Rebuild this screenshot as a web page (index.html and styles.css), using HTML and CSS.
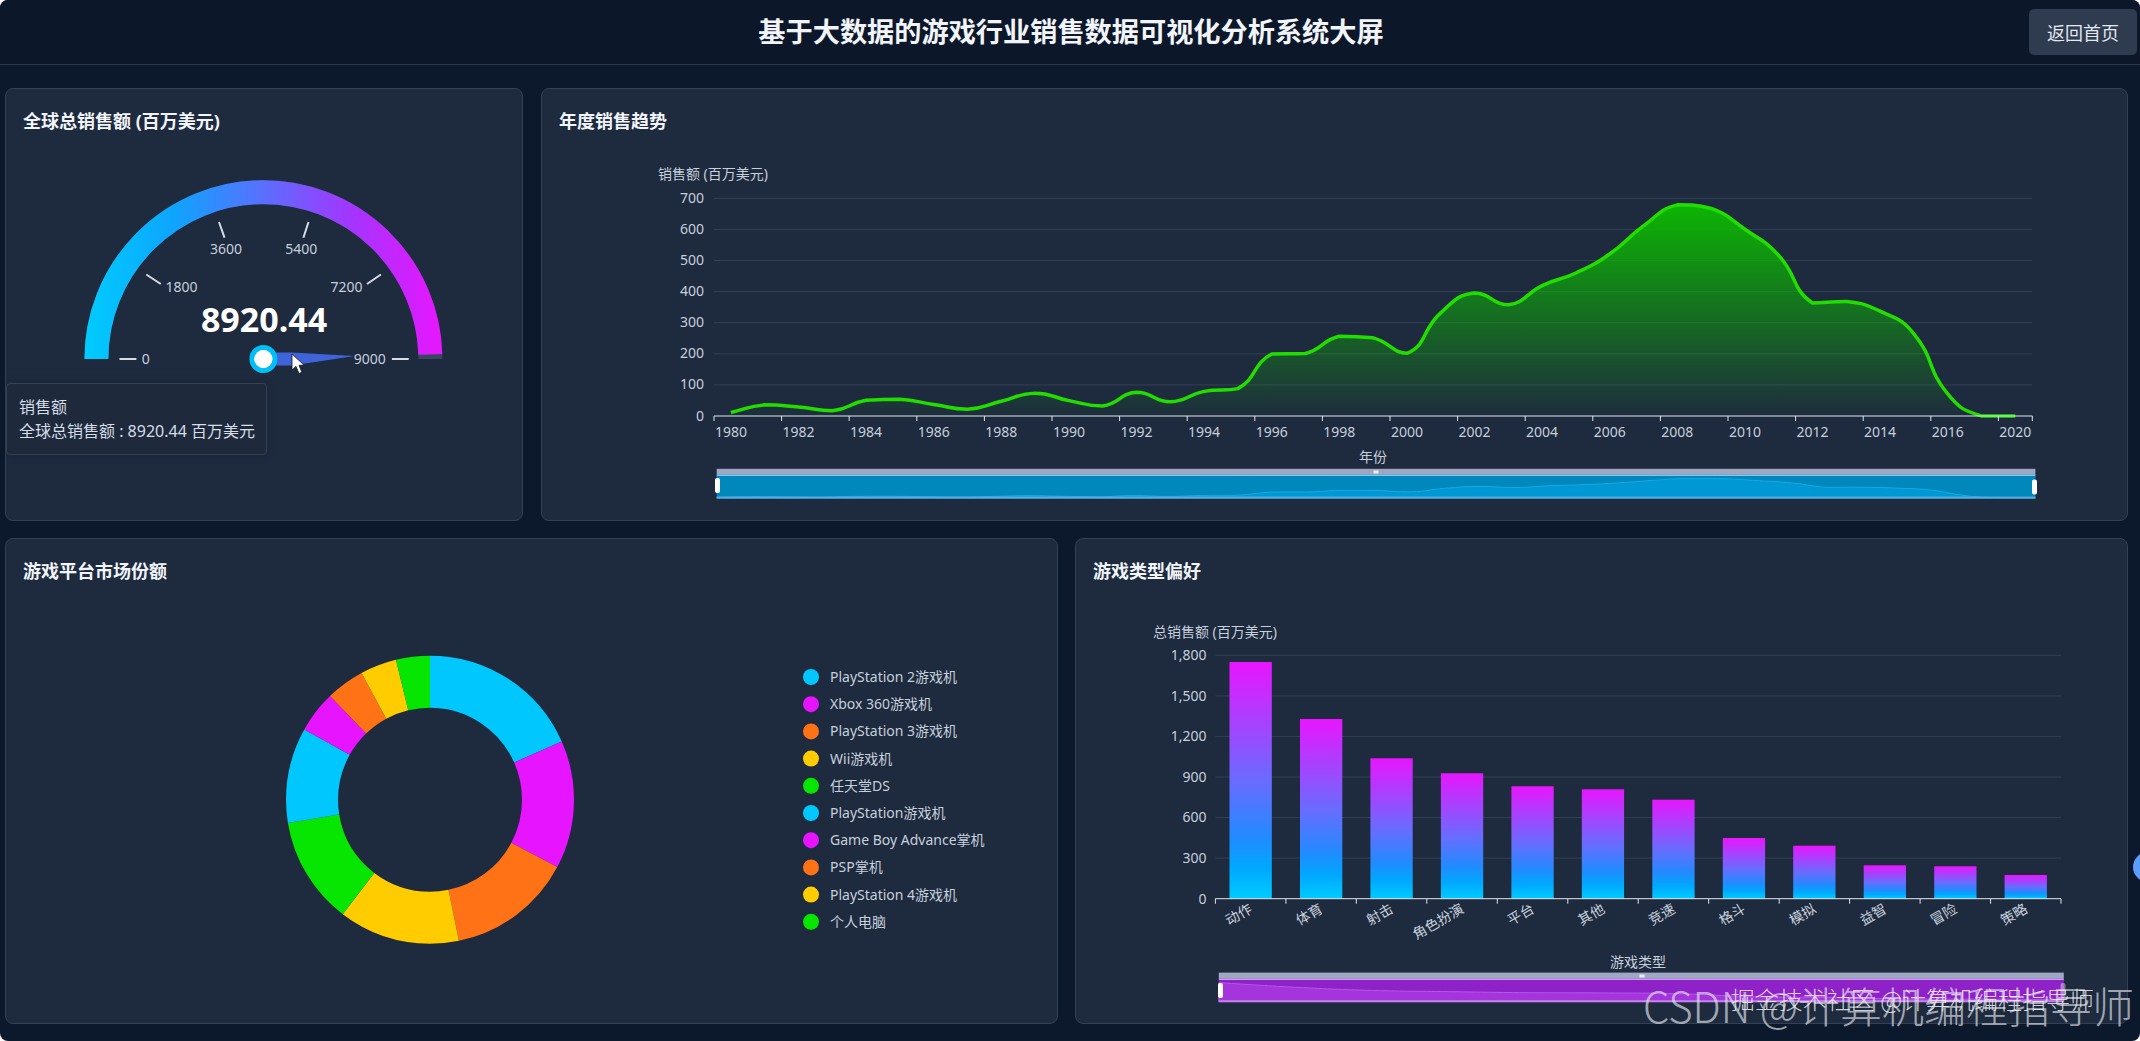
FILE: index.html
```html
<!DOCTYPE html>
<html lang="zh-CN">
<head>
    <meta charset="UTF-8">
    <meta name="viewport" content="width=device-width, initial-scale=1.0">
    <title>基于大数据的游戏行业销售数据可视化分析系统大屏</title>
    <link rel="stylesheet" href="styles.css">
</head>
<body>
<div class="screen">
    <!-- Header -->
    <header class="header">
        <h1 class="header-title">基于大数据的游戏行业销售数据可视化分析系统大屏</h1>
        <button class="back-btn">返回首页</button>
    </header>

    <main class="dashboard">
        <div class="row row-top">
            <!-- Gauge -->
            <section class="panel">
                <h2 class="panel-title">全球总销售额 (百万美元)</h2>
                <svg class="chart" viewBox="6 141 516 379">
                    <defs>
                        <linearGradient id="gaugeGrad" gradientUnits="userSpaceOnUse" x1="85" y1="0" x2="442" y2="0">
                            <stop offset="0" stop-color="#00ccff"/>
                            <stop offset="0.25" stop-color="#0ea4ff"/>
                            <stop offset="0.5" stop-color="#5a6fff"/>
                            <stop offset="0.75" stop-color="#a534ff"/>
                            <stop offset="1" stop-color="#e816ff"/>
                        </linearGradient>
                    </defs>
                    <path class="gauge-rest" d="M96.4 359A167 167 0 0 1 430.4 359"/>
                    <path class="gauge-arc" d="M96.4 359A167 167 0 0 1 430.33 354.34"/>
                    <path class="gauge-tick" d="M146.3 274.5L160.8 284M219 222L224.5 237.7M308.5 222L303.4 237.7M380.9 274.5L367 284M119.5 359H136.4M391.9 359H408.7"/>
                    <text class="t tick-label" x="145.7" y="358" text-anchor="middle">0</text>
                    <text class="t tick-label" x="181.5" y="286" text-anchor="middle">1800</text>
                    <text class="t tick-label" x="226" y="248.5" text-anchor="middle">3600</text>
                    <text class="t tick-label" x="301.3" y="248.5" text-anchor="middle">5400</text>
                    <text class="t tick-label" x="346.4" y="286" text-anchor="middle">7200</text>
                    <text class="t tick-label" x="369.8" y="358" text-anchor="middle">9000</text>
                    <text class="gauge-value" x="264" y="332" text-anchor="middle">8920.44</text>
                    <polygon class="gauge-pointer" points="270,352.5 292,352.5 354.7,356 292,365.5 270,365.5"/>
                    <circle class="gauge-hub-ring" cx="263.4" cy="359" r="11.5"/>
                    <circle class="gauge-hub" cx="263.4" cy="359" r="9"/>
                    <path class="cursor" d="M292 354V370L296 366.4L299 373.5L302 372.2L299 365.4L304 365Z"/>
                </svg>
                <div class="tooltip">
                    <div>销售额</div>
                    <div>全球总销售额 : 8920.44 百万美元</div>
                </div>
            </section>

            <!-- Yearly trend -->
            <section class="panel">
                <h2 class="panel-title">年度销售趋势</h2>
                <svg class="chart" viewBox="542 141 1585 379">
                    <defs>
                        <linearGradient id="areaGrad" x1="0" y1="0" x2="0" y2="1">
                            <stop offset="0" stop-color="#0cbc00" stop-opacity="0.95"/>
                            <stop offset="1" stop-color="#0cbc00" stop-opacity="0.02"/>
                        </linearGradient>
                    </defs>
                    <path class="grid" d="M714 198.3H2032M714 229.4H2032M714 260.5H2032M714 291.6H2032M714 322.7H2032M714 353.8H2032M714 384.9H2032"/>
                    <path id="trendArea" fill="url(#areaGrad)"/>
                    <path id="trendLine" class="trend-line"/>
                    <path class="axis" d="M714 416H2032.3M714 416v5M781.6 416v5M849.2 416v5M916.8 416v5M984.4 416v5M1052 416v5M1119.6 416v5M1187.2 416v5M1254.8 416v5M1322.4 416v5M1390 416v5M1457.6 416v5M1525.2 416v5M1592.8 416v5M1660.4 416v5M1728 416v5M1795.6 416v5M1863.2 416v5M1930.8 416v5M1998.4 416v5M2032.3 416v5"/>
                    <text class="t tick-label" x="713" y="173" text-anchor="middle">销售额 (百万美元)</text>
                    <g text-anchor="end">
                        <text class="t tick-label" x="704" y="197">700</text>
                        <text class="t tick-label" x="704" y="228">600</text>
                        <text class="t tick-label" x="704" y="259">500</text>
                        <text class="t tick-label" x="704" y="290">400</text>
                        <text class="t tick-label" x="704" y="321">300</text>
                        <text class="t tick-label" x="704" y="352.5">200</text>
                        <text class="t tick-label" x="704" y="383.5">100</text>
                        <text class="t tick-label" x="704" y="415">0</text>
                    </g>
                    <g text-anchor="middle">
                        <text class="t tick-label" x="730.9" y="431.7">1980</text>
                        <text class="t tick-label" x="798.5" y="431.7">1982</text>
                        <text class="t tick-label" x="866.1" y="431.7">1984</text>
                        <text class="t tick-label" x="933.7" y="431.7">1986</text>
                        <text class="t tick-label" x="1001.3" y="431.7">1988</text>
                        <text class="t tick-label" x="1068.9" y="431.7">1990</text>
                        <text class="t tick-label" x="1136.5" y="431.7">1992</text>
                        <text class="t tick-label" x="1204.1" y="431.7">1994</text>
                        <text class="t tick-label" x="1271.7" y="431.7">1996</text>
                        <text class="t tick-label" x="1339.3" y="431.7">1998</text>
                        <text class="t tick-label" x="1406.9" y="431.7">2000</text>
                        <text class="t tick-label" x="1474.5" y="431.7">2002</text>
                        <text class="t tick-label" x="1542.1" y="431.7">2004</text>
                        <text class="t tick-label" x="1609.7" y="431.7">2006</text>
                        <text class="t tick-label" x="1677.3" y="431.7">2008</text>
                        <text class="t tick-label" x="1744.9" y="431.7">2010</text>
                        <text class="t tick-label" x="1812.5" y="431.7">2012</text>
                        <text class="t tick-label" x="1880.1" y="431.7">2014</text>
                        <text class="t tick-label" x="1947.7" y="431.7">2016</text>
                        <text class="t tick-label" x="2015.3" y="431.7">2020</text>
                        <text class="t tick-label" x="1373" y="456.4">年份</text>
                    </g>
                    <!-- Zoom slider -->
                    <rect class="slider-top" x="716.7" y="468.8" width="1318.7" height="6"/>
                    <rect x="716.7" y="474.6" width="1318.7" height="2" fill="#7fc6ee"/>
                    <rect x="716.7" y="476" width="1318.7" height="22.4" fill="#0087bb"/>
                    <path id="trendSpark" fill="#0098d4" stroke="#16aae4"/>
                    <rect x="716.7" y="496.6" width="1318.7" height="2" fill="#58b0e2"/>
                    <rect class="slider-grip" x="1373.5" y="470.5" width="5" height="3"/>
                    <rect class="slider-handle" x="715" y="478" width="5" height="15" rx="2"/>
                    <rect class="slider-handle" x="2032" y="479.5" width="5" height="15" rx="2"/>
                </svg>
            </section>
        </div>

        <div class="row row-bottom">
            <!-- Platform share -->
            <section class="panel">
                <h2 class="panel-title">游戏平台市场份额</h2>
                <svg class="chart" viewBox="6 591 1051 432">
                    <g class="donut" transform="rotate(-90 430 799.7)">
                        <circle cx="430" cy="799.7" r="118" pathLength="360" stroke="#00c8ff" stroke-dasharray="66.2 293.8"/>
                        <circle cx="430" cy="799.7" r="118" pathLength="360" stroke="#e614ff" stroke-dasharray="51.7 308.3" stroke-dashoffset="-66.2"/>
                        <circle cx="430" cy="799.7" r="118" pathLength="360" stroke="#ff7216" stroke-dasharray="50.5 309.5" stroke-dashoffset="-117.9"/>
                        <circle cx="430" cy="799.7" r="118" pathLength="360" stroke="#ffcc00" stroke-dasharray="48.9 311.1" stroke-dashoffset="-168.4"/>
                        <circle cx="430" cy="799.7" r="118" pathLength="360" stroke="#06e600" stroke-dasharray="43.4 316.6" stroke-dashoffset="-217.3"/>
                        <circle cx="430" cy="799.7" r="118" pathLength="360" stroke="#00c8ff" stroke-dasharray="38.5 321.5" stroke-dashoffset="-260.7"/>
                        <circle cx="430" cy="799.7" r="118" pathLength="360" stroke="#e614ff" stroke-dasharray="16.8 343.2" stroke-dashoffset="-299.2"/>
                        <circle cx="430" cy="799.7" r="118" pathLength="360" stroke="#ff7216" stroke-dasharray="15.6 344.4" stroke-dashoffset="-316"/>
                        <circle cx="430" cy="799.7" r="118" pathLength="360" stroke="#ffcc00" stroke-dasharray="14.7 345.3" stroke-dashoffset="-331.6"/>
                        <circle cx="430" cy="799.7" r="118" pathLength="360" stroke="#06e600" stroke-dasharray="13.7 346.3" stroke-dashoffset="-346.3"/>
                    </g>
                    <!-- Legend -->
                    <circle cx="811" cy="677" r="8" fill="#00c8ff"/>
                    <text class="t tick-label" x="830" y="676.5">PlayStation 2游戏机</text>
                    <circle cx="811" cy="704.2" r="8" fill="#e614ff"/>
                    <text class="t tick-label" x="830" y="703.7">Xbox 360游戏机</text>
                    <circle cx="811" cy="731.4" r="8" fill="#ff7216"/>
                    <text class="t tick-label" x="830" y="730.9">PlayStation 3游戏机</text>
                    <circle cx="811" cy="758.6" r="8" fill="#ffcc00"/>
                    <text class="t tick-label" x="830" y="758.1">Wii游戏机</text>
                    <circle cx="811" cy="785.8" r="8" fill="#06e600"/>
                    <text class="t tick-label" x="830" y="785.3">任天堂DS</text>
                    <circle cx="811" cy="813" r="8" fill="#00c8ff"/>
                    <text class="t tick-label" x="830" y="812.5">PlayStation游戏机</text>
                    <circle cx="811" cy="840.2" r="8" fill="#e614ff"/>
                    <text class="t tick-label" x="830" y="839.7">Game Boy Advance掌机</text>
                    <circle cx="811" cy="867.4" r="8" fill="#ff7216"/>
                    <text class="t tick-label" x="830" y="866.9">PSP掌机</text>
                    <circle cx="811" cy="894.6" r="8" fill="#ffcc00"/>
                    <text class="t tick-label" x="830" y="894.1">PlayStation 4游戏机</text>
                    <circle cx="811" cy="921.8" r="8" fill="#06e600"/>
                    <text class="t tick-label" x="830" y="921.3">个人电脑</text>
                </svg>
            </section>

            <!-- Genre preference -->
            <section class="panel">
                <h2 class="panel-title">游戏类型偏好</h2>
                <svg class="chart" viewBox="1076 591 1051 432">
                    <defs>
                        <linearGradient id="barGrad" x1="0" y1="0" x2="0" y2="1">
                            <stop offset="0" stop-color="#e816ff"/>
                            <stop offset="0.5" stop-color="#6a6bff"/>
                            <stop offset="0.75" stop-color="#1f8cff"/>
                            <stop offset="0.87" stop-color="#00a8ff"/>
                            <stop offset="1" stop-color="#00ccff"/>
                        </linearGradient>
                    </defs>
                    <path class="grid" d="M1215.4 655.3H2061M1215.4 695.9H2061M1215.4 736.4H2061M1215.4 777H2061M1215.4 817.6H2061M1215.4 858.1H2061"/>
                    <g fill="url(#barGrad)">
                        <rect x="1229.5" y="662" width="42.3" height="236.7"/>
                        <rect x="1300" y="719" width="42.3" height="179.7"/>
                        <rect x="1370.4" y="758.3" width="42.3" height="140.4"/>
                        <rect x="1440.9" y="773.3" width="42.3" height="125.4"/>
                        <rect x="1511.4" y="786.3" width="42.3" height="112.4"/>
                        <rect x="1581.8" y="789.3" width="42.3" height="109.4"/>
                        <rect x="1652.3" y="799.7" width="42.3" height="99"/>
                        <rect x="1722.8" y="838" width="42.3" height="60.7"/>
                        <rect x="1793.2" y="845.7" width="42.3" height="53"/>
                        <rect x="1863.7" y="865.3" width="42.3" height="33.4"/>
                        <rect x="1934.2" y="866.3" width="42.3" height="32.4"/>
                        <rect x="2004.6" y="875" width="42.3" height="23.7"/>
                    </g>
                    <path class="axis" d="M1215.4 898.7H2061M1215.4 898.7v5M1285.9 898.7v5M1356.3 898.7v5M1426.8 898.7v5M1497.3 898.7v5M1567.8 898.7v5M1638.2 898.7v5M1708.7 898.7v5M1779.2 898.7v5M1849.6 898.7v5M1920.1 898.7v5M1990.6 898.7v5M2061 898.7v5"/>
                    <text class="t tick-label" x="1215" y="631.7" text-anchor="middle">总销售额 (百万美元)</text>
                    <g text-anchor="end">
                        <text class="t tick-label" x="1206.5" y="654.5">1,800</text>
                        <text class="t tick-label" x="1206.5" y="695">1,500</text>
                        <text class="t tick-label" x="1206.5" y="735.5">1,200</text>
                        <text class="t tick-label" x="1206.5" y="776">900</text>
                        <text class="t tick-label" x="1206.5" y="816.5">600</text>
                        <text class="t tick-label" x="1206.5" y="857">300</text>
                        <text class="t tick-label" x="1206.5" y="898">0</text>
                    </g>
                    <g text-anchor="end">
                        <text class="t tick-label" x="1250.6" y="907" transform="rotate(-30 1250.6 907)">动作</text>
                        <text class="t tick-label" x="1321.1" y="907" transform="rotate(-30 1321.1 907)">体育</text>
                        <text class="t tick-label" x="1391.6" y="907" transform="rotate(-30 1391.6 907)">射击</text>
                        <text class="t tick-label" x="1462" y="907" transform="rotate(-30 1462 907)">角色扮演</text>
                        <text class="t tick-label" x="1532.5" y="907" transform="rotate(-30 1532.5 907)">平台</text>
                        <text class="t tick-label" x="1603" y="907" transform="rotate(-30 1603 907)">其他</text>
                        <text class="t tick-label" x="1673.5" y="907" transform="rotate(-30 1673.5 907)">竞速</text>
                        <text class="t tick-label" x="1743.9" y="907" transform="rotate(-30 1743.9 907)">格斗</text>
                        <text class="t tick-label" x="1814.4" y="907" transform="rotate(-30 1814.4 907)">模拟</text>
                        <text class="t tick-label" x="1884.9" y="907" transform="rotate(-30 1884.9 907)">益智</text>
                        <text class="t tick-label" x="1955.4" y="907" transform="rotate(-30 1955.4 907)">冒险</text>
                        <text class="t tick-label" x="2025.8" y="907" transform="rotate(-30 2025.8 907)">策略</text>
                    </g>
                    <text class="t tick-label" x="1638" y="961" text-anchor="middle">游戏类型</text>
                    <!-- Zoom slider -->
                    <rect class="slider-top" x="1218.8" y="972.6" width="845" height="6"/>
                    <rect x="1218.8" y="978.4" width="845" height="2" fill="#c9a0ea"/>
                    <rect x="1218.8" y="980" width="845" height="22" fill="#8e22c8"/>
                    <path id="genreSpark" fill="#a434dc" stroke="#b658e6"/>
                    <rect x="1218.8" y="1000.2" width="845" height="2" fill="#c384e8"/>
                    <rect class="slider-grip" x="1639.5" y="974.5" width="5" height="3"/>
                    <rect class="slider-handle" x="1218" y="983" width="5" height="15" rx="2"/>
                    <rect class="slider-handle slider-handle-dim" x="2060.5" y="983" width="5" height="15" rx="2"/>
                </svg>
            </section>
        </div>
    </main>

    <!-- Things that sit over the page -->
    <div class="side-dot"></div>
    <div class="mark mark-big">CSDN @计算机编程指导师</div>
    <div class="mark mark-small">掘金技术社区 @计算机编程指导师</div>
</div>
<script src="charts.js"></script>
</body>
</html>
```

FILE: styles.css
```css
/* Universal Settings */
html {
    background: #ffffff;
}

body {
    margin: 0;
    font-family: "Noto Sans", "Noto Sans CJK SC", sans-serif;
    color: #e2e8f0;
    overflow: hidden;
}

.screen {
    position: relative;
    height: 100vh;
    display: flex;
    flex-direction: column;
    background: #0c182c;
    border-radius: 8px;
    overflow: hidden;
}

/* Header */
.header {
    height: 64px;
    flex: none;
    display: grid;
    grid-template-columns: 1fr auto 1fr;
    align-items: center;
    padding: 0 3px 0 5px;
    background: #0d172a;
    border-bottom: 1px solid #2a3649;
}

.header-title {
    grid-column: 2;
    margin: 0;
    font-size: 27.2px;
    line-height: 36px;
    font-weight: 700;
    color: #f1f5f9;
}

.back-btn {
    grid-column: 3;
    justify-self: end;
    width: 108px;
    height: 46px;
    font-family: inherit;
    font-size: 18px;
    color: #e2e8f0;
    background: #2f3b4e;
    border: none;
    border-radius: 5px;
}

/* Panels */
.dashboard {
    flex: 1;
    min-height: 0;
    display: flex;
    flex-direction: column;
    gap: 17px;
    padding: 23px 12px 17px 5px;
}

.row {
    display: grid;
    min-height: 0;
}

.row-top {
    height: 433px;
    flex: none;
    grid-template-columns: 518px 1fr;
    gap: 18px;
}

.row-bottom {
    flex: 1;
    grid-template-columns: 1fr 1fr;
    gap: 17px;
}

.panel {
    position: relative;
    display: flex;
    flex-direction: column;
    min-width: 0;
    min-height: 0;
    background: #1e2a3e;
    border: 1px solid #334155;
    border-radius: 8px;
}

.panel-title {
    margin: 0;
    padding: 20px 17px 8px;
    font-size: 18px;
    line-height: 24px;
    font-weight: 700;
    color: #f1f5f9;
}

.chart {
    display: block;
    flex: 1;
    width: 100%;
    min-height: 0;
}

/* Shared chart parts */
.t {
    dominant-baseline: central;
}

.tick-label {
    font-size: 14px;
    fill: #c6d0dd;
}

.grid {
    fill: none;
    stroke: #334155;
    stroke-width: 1;
}

.axis {
    fill: none;
    stroke: #e2e8f0;
    stroke-width: 1;
}

/* Gauge */
.gauge-rest,
.gauge-arc {
    fill: none;
    stroke-width: 24;
}

.gauge-rest {
    stroke: #3a4660;
}

.gauge-arc {
    stroke: url(#gaugeGrad);
}

.gauge-tick {
    fill: none;
    stroke: #d5dde8;
    stroke-width: 2;
}

.gauge-value {
    font-size: 34px;
    font-weight: 700;
    fill: #ffffff;
}

.gauge-pointer {
    fill: #3f63d8;
}

.gauge-hub-ring {
    fill: #ffffff;
    stroke: #00c0f5;
    stroke-width: 5;
}

.gauge-hub {
    fill: #ffffff;
}

.cursor {
    fill: #ffffff;
    stroke: #10151f;
    stroke-width: 0.8;
}

/* Tooltip */
.tooltip {
    position: absolute;
    left: 0;
    top: 294px;
    width: 235px;
    padding: 11px 12px;
    font-size: 16px;
    line-height: 24px;
    white-space: nowrap;
    color: #d5dde8;
    background: rgba(30, 41, 59, 0.9);
    border: 1px solid #334155;
    border-radius: 4px;
    box-shadow: 0 0 10px rgba(0, 0, 0, 0.15);
}

/* Trend line */
.trend-line {
    fill: none;
    stroke: #22dd00;
    stroke-width: 3.5;
    stroke-linejoin: round;
}

/* Donut */
.donut circle {
    fill: none;
    stroke-width: 52;
}

/* Zoom sliders */
.slider-top {
    fill: #9ea8c2;
}

.slider-grip {
    fill: #e8ecf4;
}

.slider-handle {
    fill: #ffffff;
}

.slider-handle-dim {
    opacity: 0.4;
}

/* Overlays */
.side-dot {
    position: absolute;
    left: 2133px;
    top: 852px;
    width: 30px;
    height: 30px;
    border-radius: 50%;
    background: #5b9eff;
}

.mark {
    position: absolute;
    white-space: nowrap;
    pointer-events: none;
    font-family: "Noto Sans CJK SC", sans-serif;
    font-weight: 300;
}

.mark-big {
    right: 6px;
    top: 982px;
    font-size: 42px;
    line-height: 46px;
    color: rgba(226, 230, 236, 0.68);
}

.mark-small {
    right: 46px;
    top: 983px;
    font-size: 24px;
    line-height: 32px;
    color: rgba(238, 240, 244, 0.85);
}
```

FILE: charts.js
```js
// Yearly sales, 1980-2017 and 2020
const yearly = [11.4, 35.8, 28.9, 16.8, 50.4, 53.9, 37.1, 21.7, 47.2, 73.5, 49.4, 32.2, 76.2, 46, 79.2, 88.1,
    199.2, 201, 256.5, 251.3, 201.6, 331.5, 395.5, 357.9, 419.3, 459.9, 521, 611.1, 678.9, 667.3, 600.5, 516,
    363.5, 368.1, 337.1, 264.4, 70.9, 0.05, 0.3];
const genres = [1751, 1330, 1037, 928, 831, 810, 732, 450, 390, 245, 238, 175];

function clamp(v, a, b) {
    return Math.min(Math.max(a, b), Math.max(Math.min(a, b), v));
}

// Smooth line through the points, handles kept inside each pair's y range
function smoothPath(pts) {
    function handles(i) {
        const cur = pts[i];
        const prev = pts[i - 1] || cur;
        const next = pts[i + 1] || cur;
        const dPrev = Math.hypot(cur[0] - prev[0], cur[1] - prev[1]);
        const dNext = Math.hypot(next[0] - cur[0], next[1] - cur[1]);
        const r = dPrev + dNext ? dNext / (dPrev + dNext) : 0.5;
        const vx = (next[0] - prev[0]) * 0.5;
        const vy = (next[1] - prev[1]) * 0.5;
        return {
            inn: [cur[0] - vx * (1 - r), clamp(cur[1] - vy * (1 - r), cur[1], prev[1])],
            out: [cur[0] + vx * r, clamp(cur[1] + vy * r, cur[1], next[1])]
        };
    }
    let d = `M${pts[0][0]} ${pts[0][1]}`;
    for (let i = 0; i < pts.length - 1; i++) {
        const a = handles(i).out;
        const b = handles(i + 1).inn;
        const p = pts[i + 1];
        d += `C${a[0]} ${a[1]} ${b[0]} ${b[1]} ${p[0]} ${p[1]}`;
    }
    return d;
}

function closeArea(d, x0, x1, base) {
    return `${d}L${x1} ${base}L${x0} ${base}Z`;
}

// Trend chart
const trendPts = yearly.map((v, i) => [730.9 + 33.8 * i, 416 - v * 0.311]);
const trendD = smoothPath(trendPts);
document.getElementById("trendLine").setAttribute("d", trendD);
document.getElementById("trendArea").setAttribute("d", closeArea(trendD, 730.9, 2015.3, 416));

// Slider previews
function spark(id, data, x0, x1, base, height) {
    const max = Math.max(...data);
    const step = (x1 - x0) / (data.length - 1);
    const pts = data.map((v, i) => [x0 + step * i, base - v / max * height]);
    document.getElementById(id).setAttribute("d", closeArea(smoothPath(pts), x0, x1, base));
}

spark("trendSpark", yearly, 716.7, 2035.4, 497.7, 19.3);
spark("genreSpark", genres, 1218.8, 2063.8, 1001.7, 19);
```
